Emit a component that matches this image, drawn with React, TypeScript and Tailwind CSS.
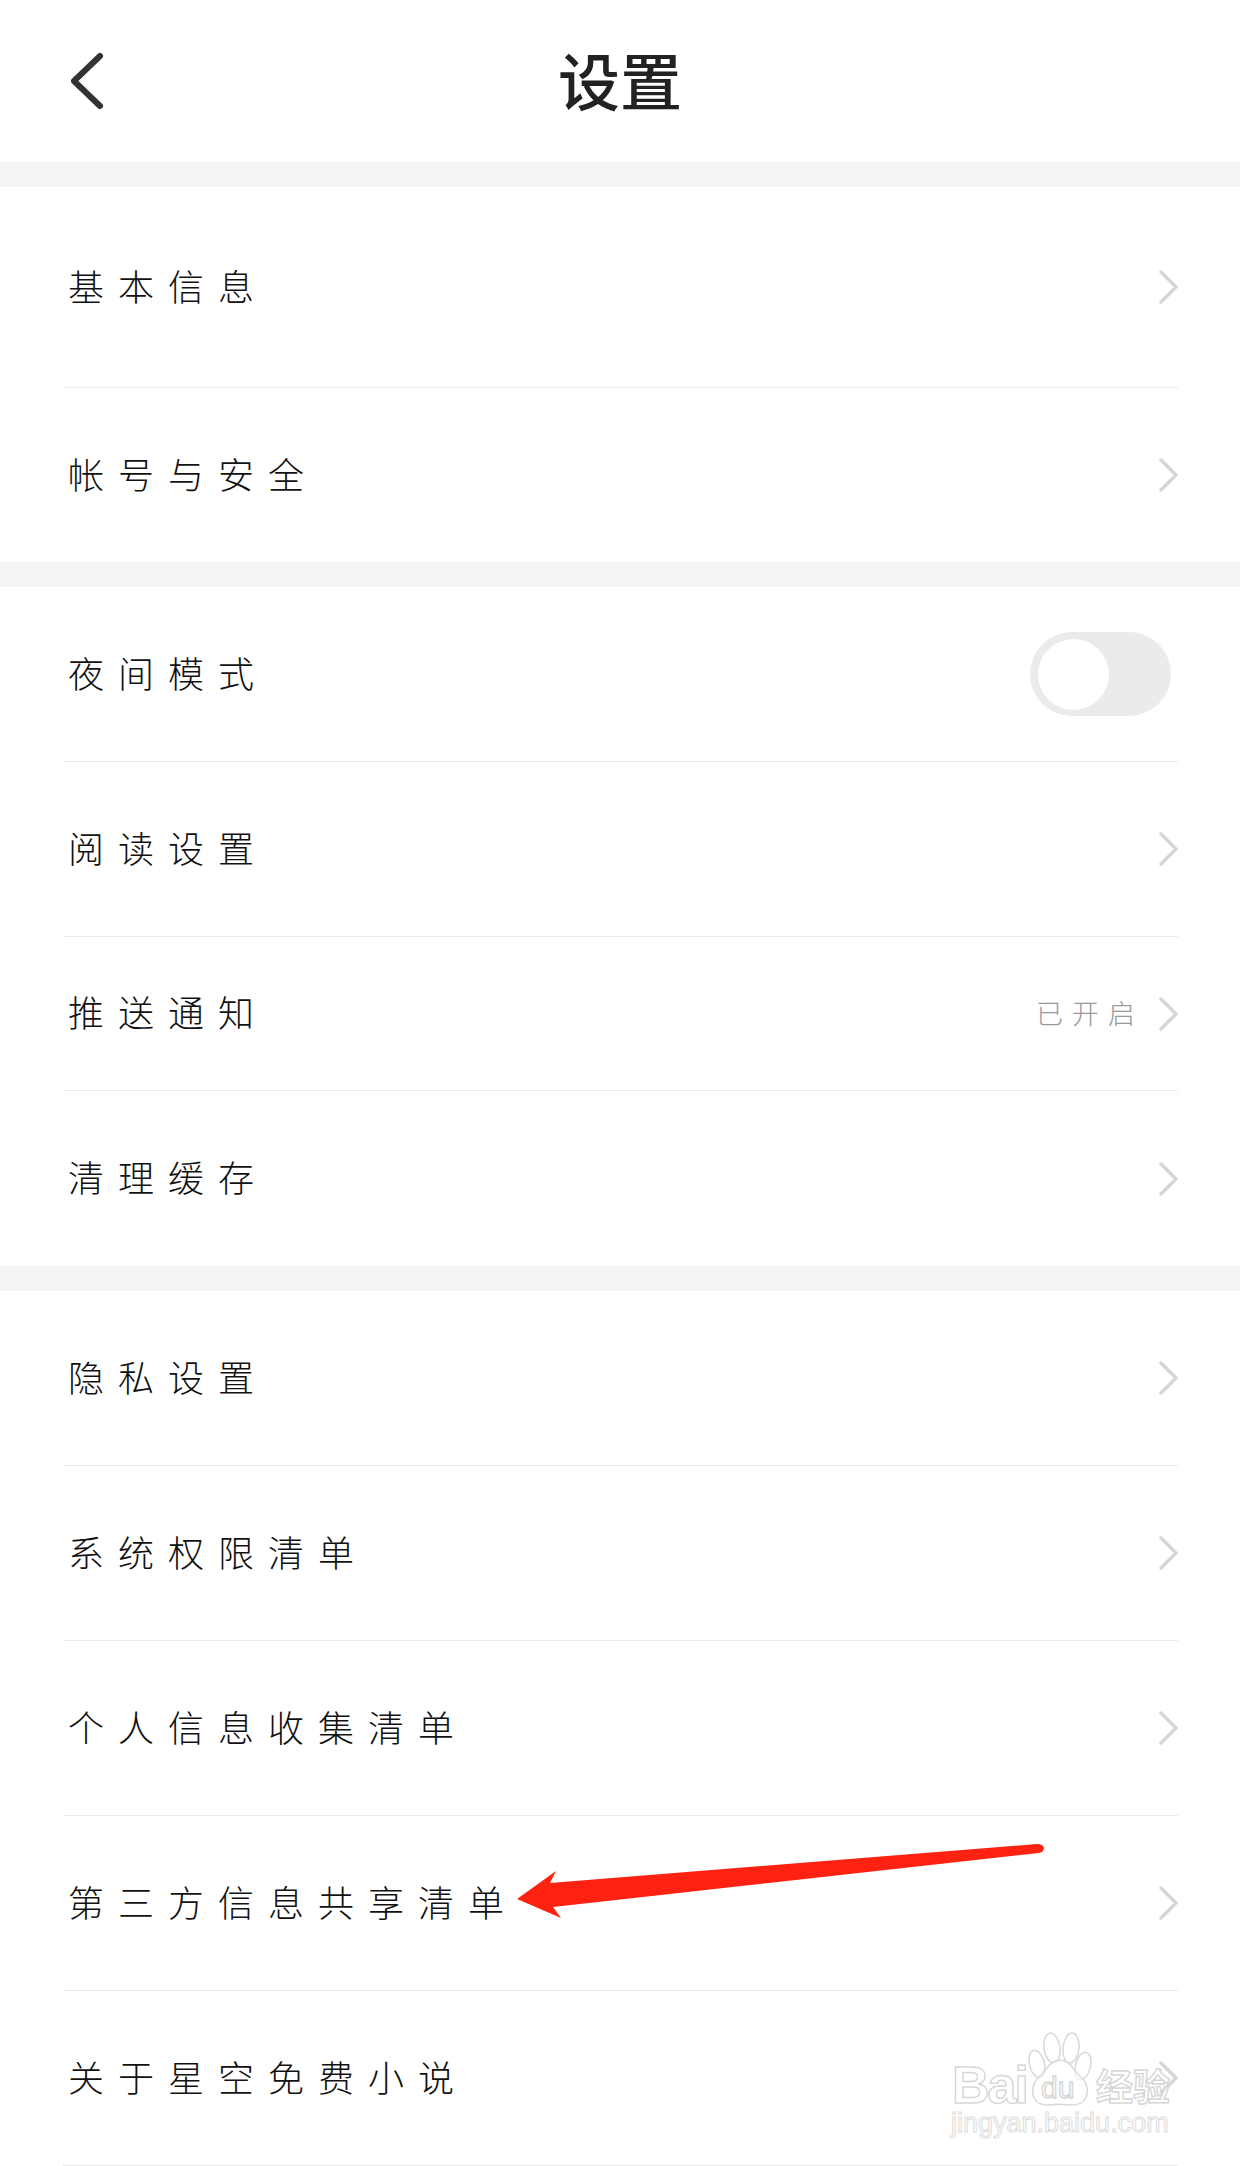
import React from 'react';

const Chevron: React.FC = () => (
  <svg width="20" height="34" viewBox="0 0 20 34" className="shrink-0" fill="none">
    <path d="M3 2 L18 17 L3 32" stroke="#d6d6d6" strokeWidth="3.5" strokeLinecap="round" strokeLinejoin="round" />
  </svg>
);

type RowProps = {
  label: string;
  height: string;
  value?: string;
  last?: boolean;
  children?: React.ReactNode;
};

const Row: React.FC<RowProps> = ({ label, height, value, last, children }) => (
  <div className={`ml-[63px] w-[1115px] flex items-center justify-between pl-[5px] ${height} ${last ? '' : 'border-b border-[#ebebeb]'}`}>
    <span className="text-[36px] tracking-[14px] font-light text-[#111111] leading-none mb-[5px]">{label}</span>
    {children ?? (
      <div className="flex items-center">
        {value && <span className="text-[27px] tracking-[9px] font-light text-[#999999] leading-none mr-[14px] mb-[2px]">{value}</span>}
        <Chevron />
      </div>
    )}
  </div>
);

const Toggle: React.FC = () => (
  <div className="w-[141px] h-[84px] rounded-full bg-[#ebebeb] mr-[7px] flex items-center pl-[8px]">
    <div className="w-[71px] h-[71px] rounded-full bg-white" />
  </div>
);

const Band: React.FC = () => <div className="h-[25px] bg-[#f5f5f5]" />;

const Watermark: React.FC = () => (
  <svg width="235" height="118" viewBox="0 0 235 118" className="absolute left-[945px] top-[2028px]" fill="none">
    <g stroke="#d8d8d8" strokeWidth="1.5" fill="#ffffff" fillOpacity="0.55">
      <ellipse cx="107" cy="20" rx="8" ry="15" transform="rotate(-8 107 20)" />
      <ellipse cx="126" cy="20" rx="8" ry="15" transform="rotate(6 126 20)" />
      <ellipse cx="92" cy="36" rx="7.5" ry="14" transform="rotate(-14 92 36)" />
      <ellipse cx="138" cy="38" rx="7.5" ry="14" transform="rotate(14 138 38)" />
      <path d="M115 32 C125 32 128 42 135 48 C146 56 146 78 125 77 C118 76 110 76 104 77 C84 78 84 56 95 48 C102 42 105 32 115 32 Z" />
    </g>
    <g fontFamily="'Liberation Sans', sans-serif" stroke="#d6d6d6" strokeWidth="1.4" fill="#ffffff" fillOpacity="0.6">
      <text x="7" y="75" fontSize="52" fontWeight="700" letterSpacing="-2">Bai</text>
      <text x="96" y="70" fontSize="30" fontWeight="400">du</text>
      <text x="6" y="104" fontSize="27" fontWeight="400" stroke="#dcdcdc" strokeWidth="1">jingyan.baidu.com</text>
    </g>
    <text x="151" y="73" fontSize="37" fontFamily="'Noto Sans CJK SC', sans-serif" fontWeight="700" stroke="#d6d6d6" strokeWidth="1.4" fill="#ffffff" fillOpacity="0.6">经验</text>
  </svg>
);

const Arrow: React.FC = () => (
  <svg width="540" height="90" viewBox="0 0 540 90" className="absolute left-[510px] top-[1835px]">
    <path
      d="M7 64 L46 36 L40 48 L527 9 Q533 9 534 13 Q534 17 529 18 L43 72 L51 83 Z"
      fill="#ff2213"
    />
  </svg>
);

export default function App() {
  return (
    <div className="relative w-[1240px] h-[2166px] bg-white overflow-hidden font-['Noto_Sans_CJK_SC','Noto_Sans',sans-serif]">
      <header className="relative h-[162px] flex items-center justify-center">
        <svg width="40" height="64" viewBox="0 0 40 64" className="absolute left-[67px] top-[49px]" fill="none">
          <path d="M33 7 L7 32 L33 57" stroke="#333333" strokeWidth="6" strokeLinecap="round" strokeLinejoin="round" />
        </svg>
        <h1 className="text-[62px] font-medium text-[#222222] leading-none mb-[4px]">设置</h1>
      </header>

      <Band />
      <Row label="基本信息" height="h-[201px]" />
      <Row label="帐号与安全" height="h-[174px]" last />

      <Band />
      <Row label="夜间模式" height="h-[175px]">
        <Toggle />
      </Row>
      <Row label="阅读设置" height="h-[175px]" />
      <Row label="推送通知" height="h-[154px]" value="已开启" />
      <Row label="清理缓存" height="h-[175px]" last />

      <Band />
      <Row label="隐私设置" height="h-[175px]" />
      <Row label="系统权限清单" height="h-[175px]" />
      <Row label="个人信息收集清单" height="h-[175px]" />
      <Row label="第三方信息共享清单" height="h-[175px]" />
      <Row label="关于星空免费小说" height="h-[175px]" />

      <Arrow />
      <Watermark />
    </div>
  );
}
